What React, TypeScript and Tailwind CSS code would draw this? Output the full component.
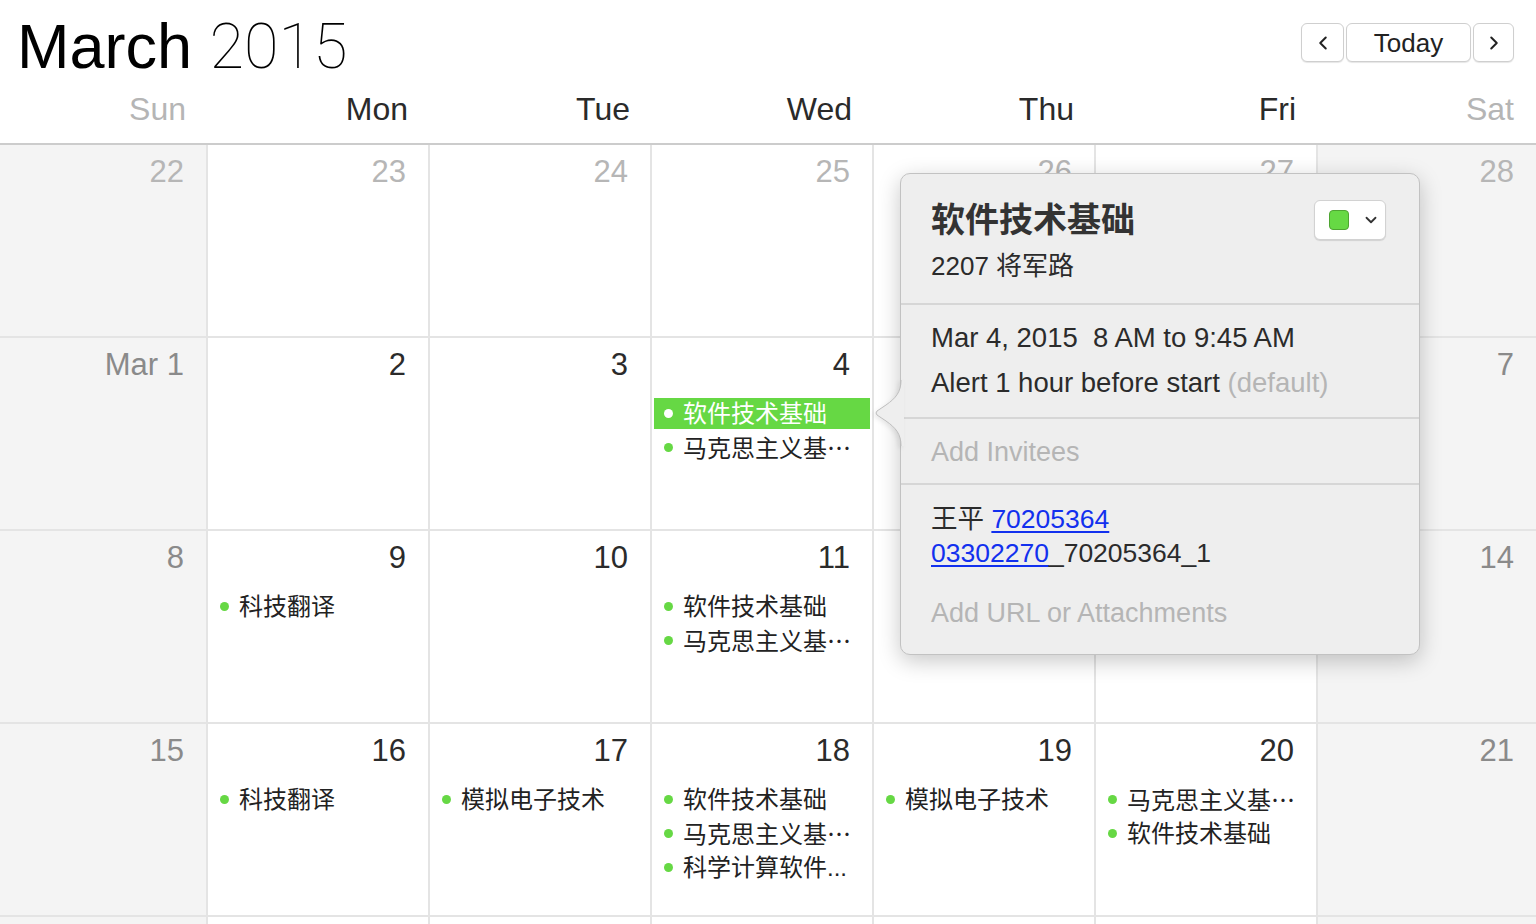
import { ChevronLeft, ChevronRight, ChevronDown } from "lucide-react";

type CalEvent = { title: string; selected?: boolean; cjkTail?: boolean };

type Day = {
  label: string;
  kind: "prev" | "weekend" | "current";
  events?: CalEvent[];
};

const font = "font-['Liberation_Sans','Noto_Sans_CJK_SC',sans-serif]";

const weekdays = ["Sun", "Mon", "Tue", "Wed", "Thu", "Fri", "Sat"];

const weeks: Day[][] = [
  [
    { label: "22", kind: "prev" },
    { label: "23", kind: "prev" },
    { label: "24", kind: "prev" },
    { label: "25", kind: "prev" },
    { label: "26", kind: "prev" },
    { label: "27", kind: "prev" },
    { label: "28", kind: "prev" },
  ],
  [
    { label: "Mar 1", kind: "weekend" },
    { label: "2", kind: "current" },
    { label: "3", kind: "current" },
    {
      label: "4",
      kind: "current",
      events: [
        { title: "软件技术基础", selected: true },
        { title: "马克思主义基", cjkTail: true },
      ],
    },
    { label: "5", kind: "current" },
    { label: "6", kind: "current" },
    { label: "7", kind: "weekend" },
  ],
  [
    { label: "8", kind: "weekend" },
    { label: "9", kind: "current", events: [{ title: "科技翻译" }] },
    { label: "10", kind: "current" },
    {
      label: "11",
      kind: "current",
      events: [{ title: "软件技术基础" }, { title: "马克思主义基", cjkTail: true }],
    },
    { label: "12", kind: "current" },
    { label: "13", kind: "current" },
    { label: "14", kind: "weekend" },
  ],
  [
    { label: "15", kind: "weekend" },
    { label: "16", kind: "current", events: [{ title: "科技翻译" }] },
    { label: "17", kind: "current", events: [{ title: "模拟电子技术" }] },
    {
      label: "18",
      kind: "current",
      events: [
        { title: "软件技术基础" },
        { title: "马克思主义基", cjkTail: true },
        { title: "科学计算软件..." },
      ],
    },
    { label: "19", kind: "current", events: [{ title: "模拟电子技术" }] },
    {
      label: "20",
      kind: "current",
      events: [{ title: "马克思主义基", cjkTail: true }, { title: "软件技术基础" }],
    },
    { label: "21", kind: "weekend" },
  ],
  [
    { label: "22", kind: "weekend" },
    { label: "23", kind: "current" },
    { label: "24", kind: "current" },
    { label: "25", kind: "current" },
    { label: "26", kind: "current" },
    { label: "27", kind: "current" },
    { label: "28", kind: "weekend" },
  ],
];

const numberColor = {
  prev: "text-[#b6b6b6]",
  weekend: "text-[#8a8a8a]",
  current: "text-[#2b2b2b]",
};

function EventRow({ ev }: { ev: CalEvent }) {
  if (ev.selected) {
    return (
      <div className="mx-[2px] flex h-[31px] items-center gap-[10px] bg-[#66d844] pl-[10px]">
        <span className="h-[9px] w-[9px] shrink-0 rounded-full bg-white" />
        <span className="whitespace-nowrap text-[24px] leading-none text-white">{ev.title}</span>
      </div>
    );
  }
  return (
    <div className="flex h-[31px] items-center gap-[10px] pl-[12px]">
      <span className="h-[9px] w-[9px] shrink-0 rounded-full bg-[#66d844]" />
      <span className="whitespace-nowrap text-[24px] leading-none text-[#222]">
        {ev.title}
        {ev.cjkTail ? <span className="font-['Noto_Sans_CJK_SC',sans-serif]">…</span> : null}
      </span>
    </div>
  );
}

function Popover() {
  return (
    <div className="absolute left-[900px] top-[173px] w-[520px] rounded-[10px] border border-[#c2c2c2] bg-[#eeeeee] shadow-[0_6px_22px_rgba(0,0,0,0.22)]">
      {/* pointer */}
      <svg
        className="absolute left-[-27px] top-[206px] drop-shadow-[-2px_2px_2px_rgba(0,0,0,0.08)]"
        width="30"
        height="66"
        viewBox="0 0 30 66"
      >
        <path
          d="M27 0 C27 12 22 18 12 25 L3 31 Q1 33 3 35 L12 41 C22 48 27 54 27 66 L30 66 L30 0 Z"
          fill="#eeeeee"
        />
        <path
          d="M27 0 C27 12 22 18 12 25 L3 31 Q1 33 3 35 L12 41 C22 48 27 54 27 66"
          fill="none"
          stroke="#bdbdbd"
          strokeWidth="1"
        />
      </svg>

      <div className="px-[30px] pb-[22px] pt-[26px]">
        <div className="flex items-start justify-between">
          <h2 className="text-[34px] font-bold leading-[40px] text-[#333]">软件技术基础</h2>
          <button
            type="button"
            className="mr-[3px] flex h-[40px] w-[72px] items-center gap-[13px] rounded-[6px] border border-[#d2d2d2] bg-white pl-[14px] shadow-[0_1px_1px_rgba(0,0,0,0.12)]"
          >
            <span className="h-[20px] w-[20px] rounded-[4px] border-[1.5px] border-[#4ea532] bg-[#66d944]" />
            <ChevronDown className="h-[18px] w-[18px] text-[#333]" strokeWidth={2.4} />
          </button>
        </div>
        <p className="mt-[11px] text-[26px] leading-[30px] text-[#2b2b2b]">2207 将军路</p>
      </div>
      <div className="h-[2px] bg-[#d6d6d6]" />

      <div className="px-[30px] pb-[17px] pt-[16px] text-[27.5px] leading-[34px] text-[#2b2b2b]">
        <p className="whitespace-pre">Mar 4, 2015  8 AM to 9:45 AM</p>
        <p className="mt-[11px]">
          Alert 1 hour before start <span className="text-[#b5b5b5]">(default)</span>
        </p>
      </div>
      <div className="h-[2px] bg-[#d6d6d6]" />

      <div className="px-[30px] pb-[14px] pt-[16px] text-[27px] leading-[34px] text-[#b5b5b5]">
        Add Invitees
      </div>
      <div className="h-[2px] bg-[#d6d6d6]" />

      <div className="px-[30px] pb-[24px] pt-[17px] text-[26.5px] leading-[34px] text-[#2b2b2b]">
        <p>
          王平 <span className="text-[#1230ee] underline underline-offset-[3px]">70205364</span>
        </p>
        <p>
          <span className="text-[#1230ee] underline underline-offset-[3px]">03302270</span>_70205364_1
        </p>
        <p className="mt-[26px] text-[27px] text-[#b5b5b5]">Add URL or Attachments</p>
      </div>
    </div>
  );
}

export default function App() {
  return (
    <div className={`relative h-[924px] overflow-hidden bg-white ${font}`}>
      <header className="flex items-start justify-between pl-[17px] pr-[22px] pt-[13px]">
        <h1 className="text-[63px] leading-[66px] text-black">
          March <span className="font-['Roboto',sans-serif] font-thin">2015</span>
        </h1>
        <div className="mt-[10px] flex gap-[2px]">
          <button
            type="button"
            className="flex h-[39px] w-[43px] items-center justify-center rounded-[6px] border border-[#cfcfcf] bg-white shadow-[0_1px_1px_rgba(0,0,0,0.1)]"
          >
            <ChevronLeft className="h-[22px] w-[22px] text-[#222]" strokeWidth={2.2} />
          </button>
          <button
            type="button"
            className="h-[39px] w-[125px] rounded-[6px] border border-[#cfcfcf] bg-white text-[26px] leading-none text-[#222] shadow-[0_1px_1px_rgba(0,0,0,0.1)]"
          >
            Today
          </button>
          <button
            type="button"
            className="flex h-[39px] w-[41px] items-center justify-center rounded-[6px] border border-[#cfcfcf] bg-white shadow-[0_1px_1px_rgba(0,0,0,0.1)]"
          >
            <ChevronRight className="h-[22px] w-[22px] text-[#222]" strokeWidth={2.2} />
          </button>
        </div>
      </header>

      <div className="mt-[9px] grid h-[56px] grid-cols-[208px_repeat(5,222px)_1fr] border-b-2 border-[#cccccc]">
        {weekdays.map((d, i) => (
          <div
            key={d}
            className={`pr-[22px] text-right text-[32px] leading-[40px] ${
              i === 0 || i === 6 ? "text-[#b5b5b5]" : "text-[#2a2a2a]"
            }`}
          >
            {d}
          </div>
        ))}
      </div>

      {weeks.map((week, wi) => (
        <div
          key={wi}
          className="grid h-[193px] grid-cols-[208px_repeat(5,222px)_1fr] border-b-2 border-[#e4e4e4]"
        >
          {week.map((day, di) => (
            <div
              key={di}
              className={`flex flex-col ${di < 6 ? "border-r-2" : ""} border-[#e4e4e4] ${
                di === 0 || di === 6 ? "bg-[#f4f4f4]" : "bg-white"
              }`}
            >
              <div
                className={`h-[46px] pr-[22px] pt-[9px] text-right text-[31px] leading-[36px] ${numberColor[day.kind]}`}
              >
                {day.label}
              </div>
              {day.events ? (
                <div className="mt-[14px] flex flex-col gap-[3px]">
                  {day.events.map((ev, ei) => (
                    <EventRow key={ei} ev={ev} />
                  ))}
                </div>
              ) : null}
            </div>
          ))}
        </div>
      ))}

      <Popover />
    </div>
  );
}
